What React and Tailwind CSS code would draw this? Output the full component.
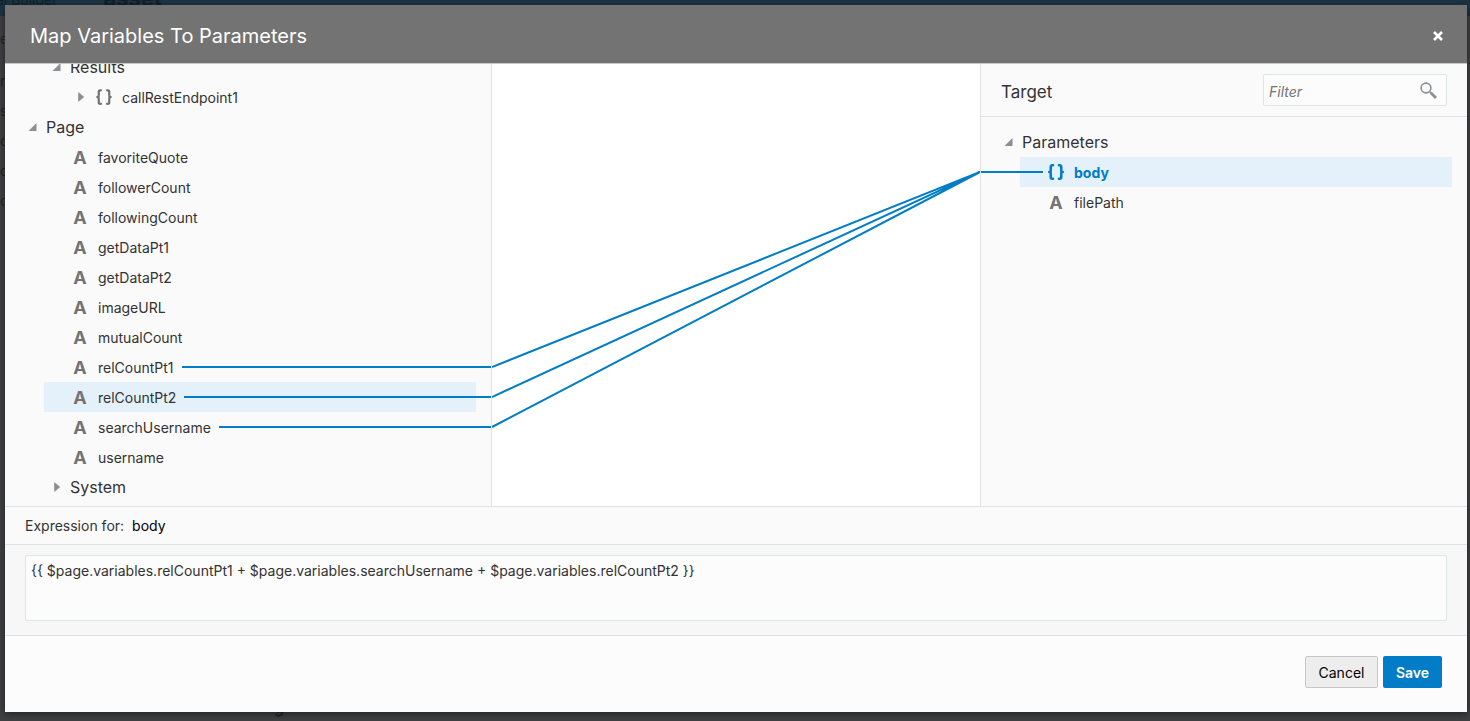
import React from "react";
import { Braces } from "lucide-react";

const sourceTree = [
  { kind: "group", label: "Results", open: true, level: 1 },
  { kind: "object", label: "callRestEndpoint1" },
  { kind: "group", label: "Page", open: true, level: 0 },
  { kind: "leaf", label: "favoriteQuote" },
  { kind: "leaf", label: "followerCount" },
  { kind: "leaf", label: "followingCount" },
  { kind: "leaf", label: "getDataPt1" },
  { kind: "leaf", label: "getDataPt2" },
  { kind: "leaf", label: "imageURL" },
  { kind: "leaf", label: "mutualCount" },
  { kind: "leaf", label: "relCountPt1", linked: true },
  { kind: "leaf", label: "relCountPt2", linked: true, selected: true },
  { kind: "leaf", label: "searchUsername", linked: true },
  { kind: "leaf", label: "username" },
  { kind: "group", label: "System", open: false, level: 1 },
];

function Arrow({ open }) {
  return (
    <svg viewBox="0 0 12 12" className="h-3 w-3 shrink-0 fill-[#8c8f92]" aria-hidden="true">
      {open ? <path d="M9.5 2v8h-8z" /> : <path d="M3.2 1l6 5-6 5z" />}
    </svg>
  );
}

function StringIcon() {
  return (
    <span className="w-5 shrink-0 text-center text-[18px] font-bold text-[#737373]" aria-hidden="true">
      A
    </span>
  );
}

function ObjectIcon({ active }) {
  return (
    <span className={active ? "flex w-5 shrink-0 justify-center text-[#007dc6]" : "flex w-5 shrink-0 justify-center text-[#737373]"}>
      <Braces size={18} strokeWidth={active ? 3.4 : 3} aria-hidden="true" />
    </span>
  );
}

function GroupRow({ label, open, level }) {
  return (
    <li className="shrink-0">
      <button
        type="button"
        aria-expanded={open}
        className={`flex h-[30px] w-full items-center gap-[7px] text-[16px] ${level === 1 ? "pl-[46px]" : "pl-[22px]"}`}
      >
        <Arrow open={open} />
        {label}
      </button>
    </li>
  );
}

function ObjectRow({ label }) {
  return (
    <li className="shrink-0">
      <button type="button" aria-expanded={false} className="flex h-[30px] w-full items-center pl-[70px] text-[14px]">
        <Arrow open={false} />
        <span className="ml-[7px] flex items-center gap-2">
          <ObjectIcon />
          {label}
        </span>
      </button>
    </li>
  );
}

function LeafRow({ label, linked, selected }) {
  return (
    <li className="ml-[39px] mr-[15px] shrink-0">
      <button
        type="button"
        className={`flex h-[30px] w-full items-center gap-2 pl-[26px] text-[14px] ${selected ? "bg-[#e4f0fa]" : ""}`}
      >
        <StringIcon />
        {label}
        {linked && <span className="-mr-[15px] h-[2px] flex-1 bg-[#007dc6]" />}
      </button>
    </li>
  );
}

function SourceRow(item) {
  if (item.kind === "group") return <GroupRow {...item} />;
  if (item.kind === "object") return <ObjectRow {...item} />;
  return <LeafRow {...item} />;
}

function Backdrop() {
  return (
    <div
      className="absolute inset-0 flex flex-col justify-between overflow-hidden bg-[#404143] text-[#222326]"
      aria-hidden="true"
    >
      <div>
        <div className="flex h-4 items-end gap-[46px] overflow-hidden bg-[#1e3442] text-[#11202a]">
          <span className="-ml-1 mb-2 text-[14px] leading-4">al Builder</span>
          <span className="mb-2 text-[22px] font-bold leading-5">asset</span>
        </div>
        <div className="flex flex-col pt-2 text-[14px] leading-[30px]">
          <span>e</span>
          <span className="mt-3">r</span>
          <span>s</span>
          <span>c</span>
          <span>c</span>
          <span>c</span>
        </div>
      </div>
      <div className="pb-1 pl-[274px] text-[16px] font-bold leading-5">g</div>
    </div>
  );
}

export default function App() {
  return (
    <div className="relative flex h-screen flex-col overflow-hidden pb-[9px] pl-[5px] pr-[3px] pt-[5px] font-[Inter,'Open_Sans',sans-serif] text-[#333333]">
      <Backdrop />
      <section
        role="dialog"
        aria-labelledby="dialog-title"
        className="relative flex min-h-0 flex-1 flex-col bg-[#fcfcfc] shadow-[0_2px_8px_rgba(0,0,0,0.5)]"
      >
        <header className="flex h-[59px] shrink-0 items-center justify-between border-b border-[#c8c8c8] bg-[#737373] pl-[25px] pr-[19px] pt-[3px]">
          <h1 id="dialog-title" className="text-[20px] leading-6 text-white">
            Map Variables To Parameters
          </h1>
          <button type="button" aria-label="Close" className="flex h-5 w-5 items-center justify-center">
            <svg viewBox="0 0 10 10" className="h-[10px] w-[10px] stroke-white" strokeWidth="2.6" aria-hidden="true">
              <path d="M1 1l8 8M9 1L1 9" />
            </svg>
          </button>
        </header>

        <div className="grid min-h-0 flex-1 grid-cols-[1fr_488px_1fr] overflow-hidden bg-[#fafafa]">
          <ul className="flex min-h-0 flex-col justify-end overflow-hidden border-r border-[#dfe1e2] pb-1">
            {sourceTree.map((item) => (
              <SourceRow key={item.label} {...item} />
            ))}
          </ul>

          <div className="min-h-0 bg-white">
            <svg
              viewBox="0 0 488 442"
              preserveAspectRatio="none"
              className="h-full w-full stroke-[#007dc6]"
              strokeWidth="2"
              fill="none"
              aria-hidden="true"
            >
              <path d="M0 303L488 108M0 333L488 108M0 363L488 108" vectorEffect="non-scaling-stroke" />
            </svg>
          </div>

          <div className="min-h-0 overflow-hidden border-l border-[#dfe1e2]">
            <div className="flex h-[53px] items-center justify-between border-b border-[#dfe1e2] pl-5 pr-5">
              <h2 className="pt-[3px] text-[17px] leading-6">Target</h2>
              <label className="flex h-8 w-[184px] items-center rounded-[2px] border border-[#dfe4e7] bg-[#fcfcfc] pl-[5px] pr-[9px]">
                <span className="sr-only">Filter</span>
                <input
                  type="text"
                  placeholder="Filter"
                  className="min-w-0 flex-1 bg-transparent pt-[3px] text-[14px] italic outline-none placeholder:text-[#737373]"
                />
                <svg viewBox="0 0 17 17" className="h-[17px] w-[17px] shrink-0 stroke-[#8c8f92]" fill="none" aria-hidden="true">
                  <circle cx="6" cy="6" r="4.9" strokeWidth="1.6" />
                  <path d="M9.6 9.6l1.6 1.6" strokeWidth="1.5" />
                  <path d="M10.8 10.8l5.2 5.2" strokeWidth="2.8" />
                </svg>
              </label>
            </div>
            <ul className="flex flex-col pt-[10px]">
              <GroupRow label="Parameters" open level={0} />
              <li className="ml-[39px] mr-[15px]">
                <button type="button" className="flex h-[30px] w-full items-center bg-[#e4f0fa] text-[14px] font-bold text-[#007dc6]">
                  <span className="-ml-[39px] mr-[3px] h-[2px] w-[62px] bg-[#007dc6]" />
                  <span className="flex items-center gap-2">
                    <ObjectIcon active />
                    body
                  </span>
                </button>
              </li>
              <LeafRow label="filePath" />
            </ul>
          </div>
        </div>

        <label
          htmlFor="expression"
          className="flex h-[39px] shrink-0 items-center gap-2 border-y border-[#dfe1e2] bg-[#fafafa] pl-5 text-[14px]"
        >
          <span>Expression for:</span>
          <span className="text-black">body</span>
        </label>
        <div className="flex shrink-0 border-b border-[#dfe1e2] bg-[#f7f7f7] pb-[14px] pl-5 pr-5 pt-[10px]">
          <textarea
            id="expression"
            className="h-[66px] w-full resize-none rounded-[2px] border border-[#dfe4e7] bg-[#fcfcfc] px-[5px] py-[5px] text-[14px] leading-5 outline-none"
            defaultValue="{{ $page.variables.relCountPt1 + $page.variables.searchUsername + $page.variables.relCountPt2 }}"
          />
        </div>
        <footer className="flex h-[76px] shrink-0 items-center justify-end gap-[5px] pb-1 pr-[25px]">
          <button type="button" className="h-8 w-[73px] rounded-[2px] border border-[#c4c8cb] bg-[#ededed] text-[14px] text-black">
            Cancel
          </button>
          <button type="button" className="h-8 w-[59px] rounded-[2px] bg-[#007dc6] text-[14px] font-semibold text-white">
            Save
          </button>
        </footer>
      </section>
    </div>
  );
}
